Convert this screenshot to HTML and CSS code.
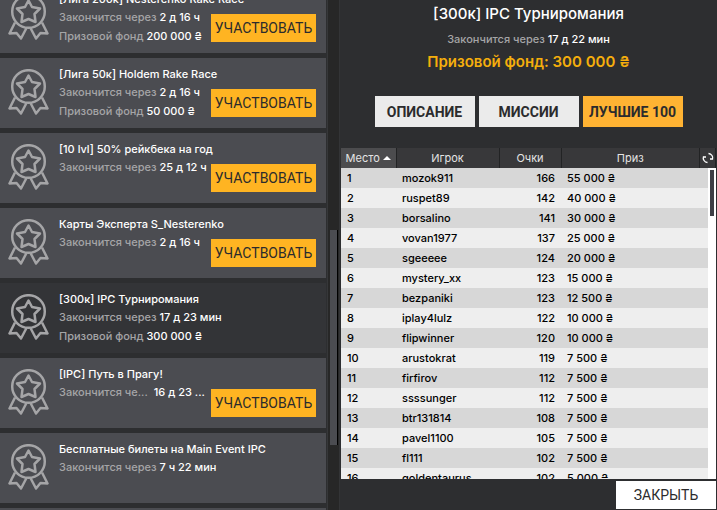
FILE: index.html
```html
<!DOCTYPE html>
<html lang="ru">
    <head>
        <meta charset="utf-8">
        <title>Турниромания</title>
        <link rel="stylesheet" href="styles.css">
    </head>
    <body>
        <svg class="sprite" aria-hidden="true">
            <symbol id="medal" viewBox="0 0 42 46">
                <g fill="none" stroke="currentColor" stroke-width="2.500" stroke-linejoin="round">
                    <circle cx="20.5" cy="17.5" r="16.3"/>
                    <path d="M20.500 6.500l3.500 6.500 8 1.500-5.500 5.500 1 8-7-3-7 3 1-8-5.500-5.500 8-1.500z"/>
                    <path d="M7 28.500L1.500 39.500l7-.5 4.500 5.500L18.500 34M34 28.500l5.500 11-7-.5-4.500 5.500L22.500 34"/>
                </g>
            </symbol>
        </svg>
        <div class="page">
            <div class="sidebar">
                <div class="list">
                    <div class="card">
                        <svg class="medal"><use href="#medal"/></svg>
                        <div class="info">
                            <h3>[Лига 200к] Nesterenko Rake Race</h3>
                            <p>Закончится через <b>2 д 16 ч</b></p>
                            <p>Призовой фонд <b>200 000 ₴</b></p>
                        </div>
                        <button class="join">УЧАСТВОВАТЬ</button>
                    </div>
                    <div class="card">
                        <svg class="medal"><use href="#medal"/></svg>
                        <div class="info">
                            <h3>[Лига 50к] Holdem Rake Race</h3>
                            <p>Закончится через <b>2 д 16 ч</b></p>
                            <p>Призовой фонд <b>50 000 ₴</b></p>
                        </div>
                        <button class="join">УЧАСТВОВАТЬ</button>
                    </div>
                    <div class="card">
                        <svg class="medal"><use href="#medal"/></svg>
                        <div class="info">
                            <h3>[10 lvl] 50% рейкбека на год</h3>
                            <p>Закончится через <b>25 д 12 ч</b></p>
                        </div>
                        <button class="join">УЧАСТВОВАТЬ</button>
                    </div>
                    <div class="card">
                        <svg class="medal"><use href="#medal"/></svg>
                        <div class="info">
                            <h3>Карты Эксперта S_Nesterenko</h3>
                            <p>Закончится через <b>2 д 16 ч</b></p>
                        </div>
                        <button class="join">УЧАСТВОВАТЬ</button>
                    </div>
                    <div class="card selected">
                        <svg class="medal"><use href="#medal"/></svg>
                        <div class="info">
                            <h3>[300к] IPC Турниромания</h3>
                            <p>Закончится через <b>17 д 23 мин</b></p>
                            <p>Призовой фонд <b>300 000 ₴</b></p>
                        </div>
                    </div>
                    <div class="card">
                        <svg class="medal"><use href="#medal"/></svg>
                        <div class="info">
                            <h3>[IPC] Путь в Прагу!</h3>
                            <p class="cut"><span>Закончится че...</span> <b>16 д 23 ...</b></p>
                        </div>
                        <button class="join">УЧАСТВОВАТЬ</button>
                    </div>
                    <div class="card">
                        <svg class="medal"><use href="#medal"/></svg>
                        <div class="info">
                            <h3>Бесплатные билеты на Main Event IPC</h3>
                            <p>Закончится через <b>7 ч 22 мин</b></p>
                        </div>
                    </div>
                    <div class="card"></div>
                </div>
                <div class="track"><div class="thumb"></div></div>
            </div>
            <div class="details">
                <div class="summary">
                    <h1>[300к] IPC Турниромания</h1>
                    <p>Закончится через <b>17 д 22 мин</b></p>
                    <h2>Призовой фонд: 300 000 ₴</h2>
                </div>
                <div class="tabs">
                    <button>ОПИСАНИЕ</button>
                    <button>МИССИИ</button>
                    <button class="active">ЛУЧШИЕ 100</button>
                </div>
                <div class="ranking">
                    <table>
                        <thead>
                            <tr>
                                <th class="place">Место <svg class="sort" viewBox="0 0 8 4"><path d="M0 4l4-4 4 4z"/></svg></th>
                                <th class="player">Игрок</th>
                                <th class="points">Очки</th>
                                <th class="prize">Приз</th>
                                <th class="reload">
                                    <button aria-label="Обновить">
                                        <svg viewBox="0 0 12 12"><path d="M5.500 10.500A4.500 4.500 0 0 1 1.500 4.500M1 5h3M6.500 1.500A4.500 4.500 0 0 1 10.500 7.500M11 7H8" fill="none" stroke="currentColor" stroke-width="1.300"/></svg>
                                    </button>
                                </th>
                            </tr>
                        </thead>
                        <tbody>
                            <tr><td>1</td><td>mozok911</td><td>166</td><td colspan="2">55 000 ₴</td></tr>
                            <tr><td>2</td><td>ruspet89</td><td>142</td><td colspan="2">40 000 ₴</td></tr>
                            <tr><td>3</td><td>borsalino</td><td>141</td><td colspan="2">30 000 ₴</td></tr>
                            <tr><td>4</td><td>vovan1977</td><td>137</td><td colspan="2">25 000 ₴</td></tr>
                            <tr><td>5</td><td>sgeeeee</td><td>124</td><td colspan="2">20 000 ₴</td></tr>
                            <tr><td>6</td><td>mystery_xx</td><td>123</td><td colspan="2">15 000 ₴</td></tr>
                            <tr><td>7</td><td>bezpaniki</td><td>123</td><td colspan="2">12 500 ₴</td></tr>
                            <tr><td>8</td><td>iplay4lulz</td><td>122</td><td colspan="2">10 000 ₴</td></tr>
                            <tr><td>9</td><td>flipwinner</td><td>120</td><td colspan="2">10 000 ₴</td></tr>
                            <tr><td>10</td><td>arustokrat</td><td>119</td><td colspan="2">7 500 ₴</td></tr>
                            <tr><td>11</td><td>firfirov</td><td>112</td><td colspan="2">7 500 ₴</td></tr>
                            <tr><td>12</td><td>ssssunger</td><td>112</td><td colspan="2">7 500 ₴</td></tr>
                            <tr><td>13</td><td>btr131814</td><td>108</td><td colspan="2">7 500 ₴</td></tr>
                            <tr><td>14</td><td>pavel1100</td><td>105</td><td colspan="2">7 500 ₴</td></tr>
                            <tr><td>15</td><td>fl111</td><td>102</td><td colspan="2">7 500 ₴</td></tr>
                            <tr><td>16</td><td>goldentaurus</td><td>102</td><td colspan="2">5 000 ₴</td></tr>
                        </tbody>
                    </table>
                    <div class="table-track"><div class="table-thumb"></div></div>
                </div>
                <div class="footer">
                    <button class="close">ЗАКРЫТЬ</button>
                </div>
            </div>
        </div>
    </body>
</html>
```
FILE: styles.css
```css
:root {
    --dark: #2d2e30;
    --card: #4b4c51;
    --grey: #a5a5a7;
    --yellow: #ffb422;
}
* {
    box-sizing: border-box;
}
body {
    margin: 0;
    background-color: var(--dark);
    color: white;
    font-family: Inter, "Noto Sans", sans-serif;
    font-size: 11px;
}
h1, h2, h3, p {
    margin: 0;
    font-weight: 500;
}
b {
    color: white;
    font-weight: 500;
}
button {
    border: none;
    padding: 0;
    font-family: Roboto, sans-serif;
    font-size: 14px;
    color: #2b2b2d;
}
.sprite {
    display: none;
}
.page {
    display: flex;
    height: 100vh;
    overflow: hidden;
}
.sidebar {
    display: flex;
    flex: 0 0 340px;
    min-width: 0;
    border-right: 1px solid #333436;
}
.list {
    display: flex;
    flex-direction: column;
    flex: 1;
    gap: 5px;
    min-width: 0;
    /* scrolled part of the list */
    margin-top: -17px;
}
.card {
    display: flex;
    flex: 0 0 70px;
    padding: 7px 10px 0 8px;
    background-color: var(--card);
}
.card.selected {
    background-color: #333437;
}
.medal {
    flex: 0 0 42px;
    height: 46px;
    margin-top: 4px;
    color: var(--grey);
}
.info {
    flex: 1;
    min-width: 0;
    padding-left: 9px;
    white-space: nowrap;
}
.info h3 {
    font-size: 11px;
    line-height: 18px;
}
.info p {
    line-height: 19px;
    color: var(--grey);
}
.info .cut {
    display: flex;
    gap: 6px;
}
.join {
    align-self: flex-end;
    flex: 0 0 105px;
    height: 28px;
    margin-bottom: 11px;
    background-color: var(--yellow);
}
.track {
    flex: 0 0 12px;
    margin-left: 1px;
    padding: 0 1px 0 2px;
    border-left: 1px solid #363739;
    background-color: #272727;
}
.thumb {
    height: 215px;
    margin-top: 230px;
    border-right: 1px solid black;
    background-color: var(--card);
}
.details {
    display: flex;
    flex-direction: column;
    flex: 1;
    min-width: 0;
    padding: 0 1px;
}
.summary {
    padding-top: 2px;
    text-align: center;
}
.summary h1 {
    font-size: 15px;
    line-height: 24px;
}
.summary p {
    line-height: 26px;
    color: var(--grey);
}
.summary h2 {
    font-size: 15px;
    font-weight: 600;
    line-height: 20px;
    color: #f5ae0c;
}
.tabs {
    display: flex;
    justify-content: center;
    gap: 4px;
    margin: 24px 0 21px;
}
.tabs button {
    width: 100px;
    height: 31px;
    background-color: #ebebeb;
    font-weight: 700;
}
.tabs .active {
    background-color: #ffb333;
}
.ranking {
    position: relative;
    flex: 1;
    overflow: hidden;
    background-color: white;
}
table {
    width: 100%;
    table-layout: fixed;
    border-collapse: collapse;
    color: black;
}
th, td {
    height: 20px;
    padding: 0 6px;
    font-weight: 500;
    text-align: left;
    white-space: nowrap;
}
th {
    padding: 0;
    border-right: 1px solid #222324;
    background-color: #38383a;
    font-weight: 400;
    color: #e4e4e4;
    text-align: center;
}
td:nth-child(3) {
    text-align: right;
}
tbody tr {
    background-color: #eeeeee;
}
tbody tr:nth-child(odd) {
    background-color: #d7d7d7;
}
.place {
    width: 55px;
    background-color: #4c4c4e;
}
.player {
    width: 103px;
}
.points {
    width: 62px;
}
.reload {
    width: 16px;
}
.reload button {
    display: block;
    width: 15px;
    height: 12px;
    background: none;
    color: white;
}
.reload svg {
    display: block;
    width: 12px;
    height: 12px;
    margin: 0 auto;
}
.sort {
    width: 8px;
    height: 4px;
    margin-bottom: 2px;
    fill: white;
}
.table-track {
    position: absolute;
    top: 20px;
    right: 0;
    bottom: 0;
    width: 8px;
    padding: 2px;
    background-color: white;
}
.table-thumb {
    height: 46px;
    background-color: #3e3f46;
}
.footer {
    display: flex;
    justify-content: flex-end;
    padding: 2px 0 1px;
}
.close {
    width: 100px;
    height: 28px;
    background-color: white;
}
```
